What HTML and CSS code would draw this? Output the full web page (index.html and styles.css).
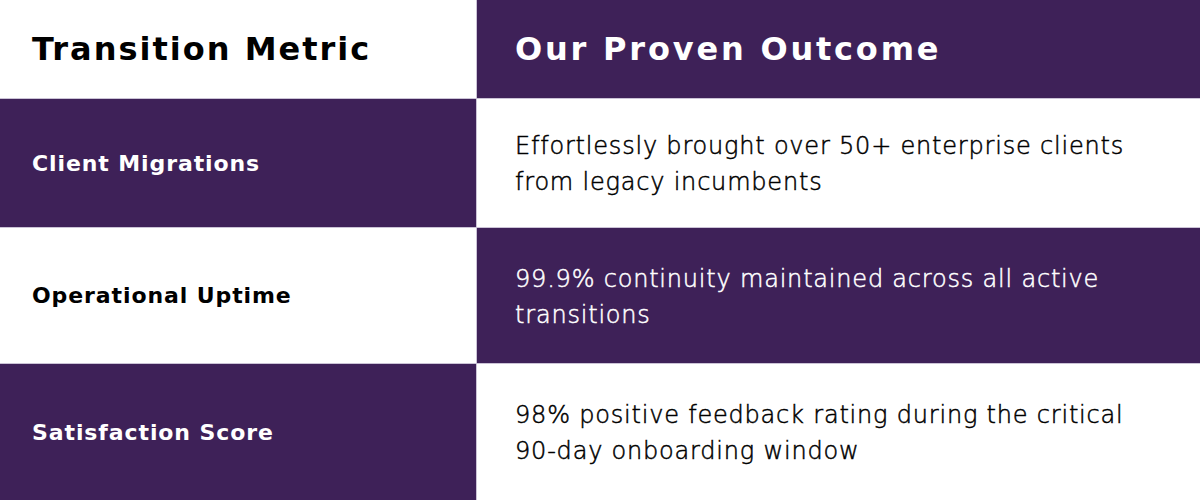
FILE: index.html
```html
<!DOCTYPE html>
<html lang="en">
<head>
<meta charset="utf-8">
<title>Transition Metrics</title>
<link rel="stylesheet" href="styles.css">
</head>
<body>
<div class="table">
  <div class="cell head light"><h2 class="head-text">Transition Metric</h2></div>
  <div class="cell head dark right"><h2 class="head-text wide">Our Proven Outcome</h2></div>

  <div class="cell dark"><span class="label">Client Migrations</span></div>
  <div class="cell light right"><p class="desc">Effortlessly brought over 50+ enterprise clients<br>from legacy incumbents</p></div>

  <div class="cell light"><span class="label">Operational Uptime</span></div>
  <div class="cell dark right"><p class="desc">99.9% continuity maintained across all active<br>transitions</p></div>

  <div class="cell dark"><span class="label">Satisfaction Score</span></div>
  <div class="cell light right"><p class="desc">98% positive feedback rating during the critical<br>90-day onboarding window</p></div>
</div>
</body>
</html>
```

FILE: styles.css
```css
* { box-sizing: border-box; }
html, body { margin: 0; padding: 0; }
body {
  width: 1200px;
  height: 500px;
  overflow: hidden;
  font-family: "DejaVu Sans", "Open Sans", sans-serif;
  background: #ffffff;
}
.table {
  display: grid;
  grid-template-columns: 476px 723px;
  grid-template-rows: 98px 128px 135px 136px;
  gap: 1px;
  background: #cbc3d6;
  width: 1200px;
  height: 500px;
}
.cell {
  display: flex;
  align-items: center;
  padding: 0 16px 0 32px;
  white-space: nowrap;
}
.cell.right { padding-left: 38px; }
.light { background: #ffffff; color: #000000; }
.dark { background: #3e2158; color: #ffffff; }
.head-text {
  margin: 0;
  font-size: 32px;
  font-weight: 700;
  letter-spacing: 2px;
  line-height: 40px;
}
.head-text.wide { letter-spacing: 2.8px; }
.label {
  font-size: 22px;
  font-weight: 700;
  letter-spacing: 0.9px;
}
.desc {
  margin: 2px 0 0;
  font-size: 24px;
  font-weight: 200;
  letter-spacing: 0.8px;
  line-height: 36px;
  -webkit-text-stroke: 0.5px currentColor;
}
```
